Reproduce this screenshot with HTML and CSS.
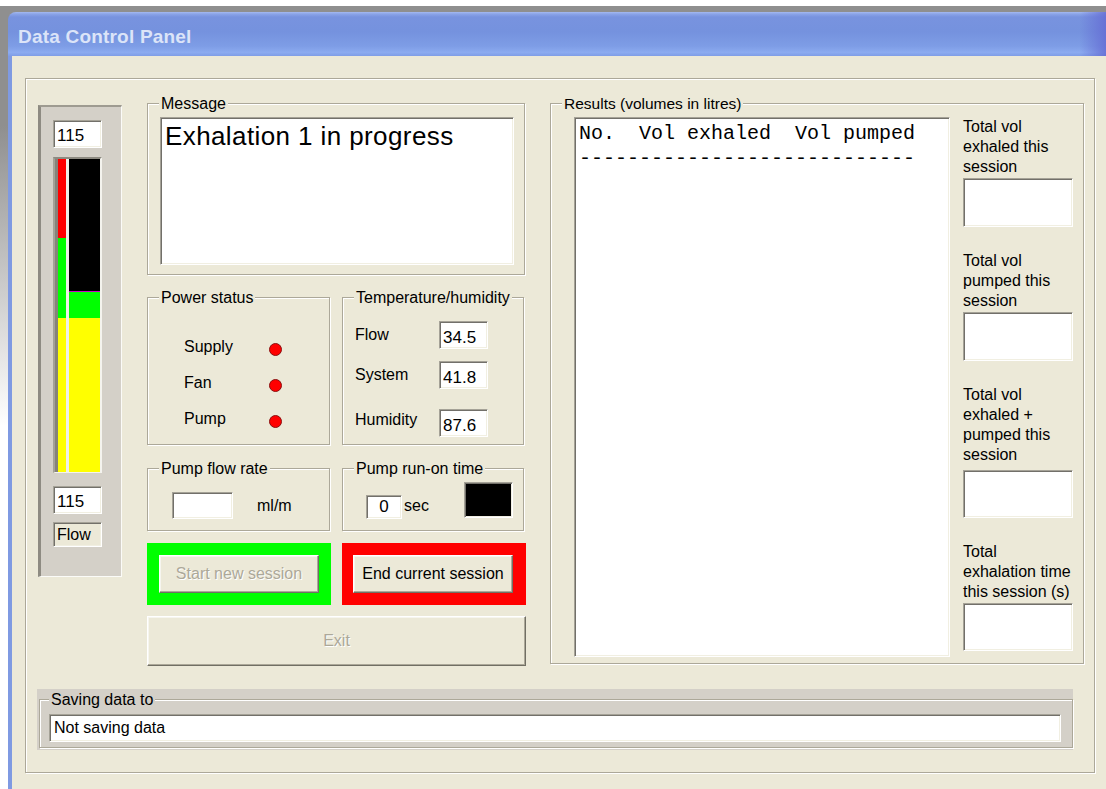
FILE: index.html
```html
<!DOCTYPE html>
<html lang="en">
<head>
<meta charset="utf-8">
<title>Data Control Panel</title>
<link rel="stylesheet" href="styles.css">
</head>
<body>
<div class="desktop">
  <div class="window">
    <div class="titlebar"><span class="title">Data Control Panel</span></div>
    <div class="client">
      <div class="frame">
        <div class="main-row">

          <!-- flow meter -->
          <div class="meter">
            <div class="field value meter-value">115</div>
            <div class="bargraph">
              <div class="bar bar-thin">
                <div class="seg seg-red" style="height:79px"></div>
                <div class="seg seg-green" style="height:80px"></div>
                <div class="seg seg-yellow"></div>
              </div>
              <div class="bar-divider"></div>
              <div class="bar bar-wide">
                <div class="seg seg-black" style="height:132px"></div>
                <div class="seg seg-marker"></div>
                <div class="seg seg-green" style="height:26px"></div>
                <div class="seg seg-yellow"></div>
              </div>
            </div>
            <div class="field value meter-value meter-low">115</div>
            <div class="field meter-caption">Flow</div>
          </div>

          <!-- centre column -->
          <div class="controls">
            <fieldset class="group message-group">
              <legend>Message</legend>
              <div class="message-body">
                <div class="field message-box">Exhalation 1 in progress</div>
              </div>
            </fieldset>

            <div class="pair status-pair">
              <fieldset class="group power-group">
                <legend>Power status</legend>
                <div class="status-grid">
                  <span>Supply</span><span class="led"></span>
                  <span>Fan</span><span class="led"></span>
                  <span>Pump</span><span class="led"></span>
                </div>
              </fieldset>
              <fieldset class="group temp-group">
                <legend>Temperature/humidity</legend>
                <div class="temp-body">
                  <div class="temp-row">
                    <span class="temp-label">Flow</span>
                    <div class="field value temp-value">34.5</div>
                  </div>
                  <div class="temp-row">
                    <span class="temp-label">System</span>
                    <div class="field value temp-value">41.8</div>
                  </div>
                  <div class="temp-row temp-row-humidity">
                    <span class="temp-label">Humidity</span>
                    <div class="field value temp-value">87.6</div>
                  </div>
                </div>
              </fieldset>
            </div>

            <div class="pair pump-pair">
              <fieldset class="group pump-group">
                <legend>Pump flow rate</legend>
                <div class="rate-body">
                  <div class="field value rate-value"></div>
                  <span class="unit">ml/m</span>
                </div>
              </fieldset>
              <fieldset class="group runon-group">
                <legend>Pump run-on time</legend>
                <div class="runon-body">
                  <div class="field value runon-value">0</div>
                  <span class="sec">sec</span>
                  <div class="field lamp"></div>
                </div>
              </fieldset>
            </div>

            <div class="pair session-pair">
              <div class="session-frame frame-green">
                <button class="btn" disabled>Start new session</button>
              </div>
              <div class="session-frame frame-red">
                <button class="btn">End current session</button>
              </div>
            </div>

            <button class="btn exit-btn" disabled>Exit</button>
          </div>

          <!-- results -->
          <fieldset class="group results-group">
            <legend>Results (volumes in litres)</legend>
            <div class="results-body">
              <div class="field results-list">No.  Vol exhaled  Vol pumped
----------------------------</div>
              <div class="totals">
                <div class="total-label">Total vol<br>exhaled this<br>session</div>
                <div class="field total-box"></div>
                <div class="total-label total-next">Total vol<br>pumped this<br>session</div>
                <div class="field total-box"></div>
                <div class="total-label total-next">Total vol<br>exhaled +<br>pumped this<br>session</div>
                <div class="field total-box total-box-low"></div>
                <div class="total-label total-next">Total<br>exhalation time<br>this session (s)</div>
                <div class="field total-box total-box-last"></div>
              </div>
            </div>
          </fieldset>
        </div>

        <div class="saving">
          <fieldset class="group saving-group">
            <legend>Saving data to</legend>
            <div class="saving-body">
              <div class="field saving-path">Not saving data</div>
            </div>
          </fieldset>
        </div>
      </div>
    </div>
  </div>
</div>
</body>
</html>
```

FILE: styles.css
```css
* { box-sizing: border-box; }

html, body {
  margin: 0;
  height: 100%;
  overflow: hidden;
  background: #fff;
}

body {
  font-family: "Liberation Sans", Arial, sans-serif;
  font-size: 16px;
  color: #000;
}

/* desktop + window chrome */
.desktop {
  margin-top: 6px;
  height: 783px;
  background: linear-gradient(180deg, #8f8f8f 0, #8f8f8f 120px, #fff 420px);
  padding: 6px 0 0 8px;
}

.window {
  width: 1098px;
  height: 777px;
  display: flex;
  flex-direction: column;
}

.titlebar {
  flex: none;
  height: 44px;
  border-top-left-radius: 8px;
  padding: 5px 0 0 10px;
  display: flex;
  align-items: center;
  background:
    linear-gradient(90deg, rgba(104, 112, 214, 0) 97.6%, rgba(100, 108, 212, .85) 100%),
    linear-gradient(180deg, #a5baf1 0, #8ba4e8 2px, #7893df 5px, #7592de 45%, #7e9de6 78%, #8cabf0 92%, #7f9de6 100%);
}

.title {
  color: #dce4f8;
  font-weight: bold;
  font-size: 19px;
  letter-spacing: .2px;
}

.client {
  flex: 1;
  background: #ece9d8;
  border-left: 4px solid #7f9ae2;
  padding: 22px 0 0 13px;
}

.frame {
  width: 1070px;
  height: 695px;
  border: 1px solid #aca899;
  box-shadow: inset 1px 1px 0 #fff, 1px 1px 0 #fff;
  padding: 16px 0 0 12px;
}

.main-row {
  display: flex;
  align-items: flex-start;
  height: 571px;
}

/* shared controls */
.field {
  background: #fff;
  border: 1px solid;
  border-color: #a5a297 #fff #fff #a5a297;
  box-shadow: inset 1px 1px 0 #72706a, inset -1px -1px 0 #f1efe2;
}

.value {
  font-size: 17px;
  line-height: 24px;
  padding: 3px 0 0 3px;
  white-space: nowrap;
  overflow: hidden;
}

.group {
  margin: 0;
  padding: 0;
  min-width: 0;
  border: 1px solid #aca899;
  box-shadow: inset 1px 1px 0 #fff, 1px 1px 0 #fff;
}

.group > legend {
  margin-left: 11px;
  padding: 0 2px;
  font-size: 16px;
  line-height: 17px;
  background: #ece9d8;
}

.btn {
  display: block;
  width: 160px;
  height: 38px;
  padding: 0;
  font-family: inherit;
  font-size: 16px;
  color: #000;
  background: #ece9d8;
  border: 1px solid;
  border-color: #fff #716f64 #716f64 #fff;
  box-shadow: inset -1px -1px 0 #aca899, inset 1px 1px 0 #f6f5ef;
}

.btn:disabled {
  color: #aca899;
  text-shadow: 1px 1px 0 #fff;
}

/* flow meter */
.meter {
  flex: none;
  width: 84px;
  height: 472px;
  margin-top: 10px;
  border-style: solid;
  border-width: 2px 1px 1px 3px;
  border-color: #9e9b91 #fbfbf8 #fbfbf8 #8e8b82;
  background: #d4d0c8;
  padding: 13px 0 0 12px;
}

.meter-value {
  width: 49px;
  height: 28px;
}

.meter-low { margin-top: 13px; }

.meter-caption {
  width: 49px;
  height: 25px;
  margin-top: 8px;
  background: #ece9d8;
  line-height: 20px;
  padding: 2px 0 0 3px;
}

.bargraph {
  display: flex;
  width: 49px;
  height: 316px;
  margin-top: 9px;
  border-style: solid;
  border-width: 2px 2px 1px 2px;
  border-color: #8d8a81 #f4f3ee #f4f3ee #a4a197;
  padding-left: 3px;
  background: #86837a;
}

.bar {
  display: flex;
  flex-direction: column;
}

.bar-thin { width: 8px; }
.bar-wide { width: 31px; }

.bar-divider {
  width: 3px;
  background: #f0f0ea;
}

.seg { flex: none; }
.seg-red { background: #ff0000; }
.seg-green { background: #00ff00; }
.seg-black { background: #000; }
.seg-marker { height: 1px; background: #c800c8; }
.seg-yellow { flex: 1; background: #ffff00; }

/* centre column */
.controls {
  flex: none;
  width: 379px;
  margin-left: 25px;
}

.message-group {
  width: 378px;
  height: 180px;
}

.message-body { padding: 5px 0 0 12px; }

.message-box {
  width: 354px;
  height: 148px;
  font-size: 26px;
  line-height: 30px;
  letter-spacing: .4px;
  padding: 3px 0 0 4px;
}

.pair { display: flex; }

.status-pair { margin-top: 14px; }

.power-group {
  width: 183px;
  height: 156px;
}

.temp-group {
  width: 182px;
  height: 156px;
  margin-left: 12px;
}

.status-grid {
  display: grid;
  grid-template-columns: 85px 13px;
  grid-auto-rows: 36px;
  padding: 31px 0 0 36px;
  line-height: 20px;
}

.led {
  width: 13px;
  height: 13px;
  margin-top: 6px;
  border-radius: 50%;
  background: #ff0000;
  border: 1px solid #8a1010;
}

.temp-body { padding: 15px 0 0 12px; }

.temp-row {
  display: flex;
  height: 28px;
}

.temp-row + .temp-row { margin-top: 12px; }
.temp-row-humidity.temp-row { margin-top: 20px; }

.temp-label {
  width: 84px;
  padding-top: 4px;
  line-height: 20px;
}

.temp-row-humidity .temp-label { padding-top: 1px; }

.temp-value {
  width: 49px;
  height: 28px;
  padding-top: 4px;
}

.pump-pair { margin-top: 15px; }

.pump-group {
  width: 183px;
  height: 71px;
}

.rate-body {
  display: flex;
  align-items: center;
  padding: 15px 0 0 24px;
}

.rate-value {
  width: 61px;
  height: 27px;
}

.unit {
  margin-left: 24px;
  line-height: 20px;
}

.runon-group {
  width: 182px;
  height: 71px;
  margin-left: 12px;
}

.runon-body {
  display: flex;
  align-items: flex-end;
  height: 42px;
  padding: 5px 10px 0 23px;
}

.runon-value {
  width: 36px;
  height: 24px;
  padding: 0;
  line-height: 22px;
  text-align: center;
}

.sec {
  margin: 0 0 3px 2px;
  line-height: 20px;
}

.lamp {
  margin-left: auto;
  margin-bottom: 1px;
  width: 49px;
  height: 36px;
}

.field.lamp { background: #000; }

.session-pair { margin-top: 12px; }

.session-frame {
  width: 184px;
  height: 62px;
  padding: 12px;
}

.frame-green { background: #00ff00; }

.frame-red {
  background: #ff0000;
  margin-left: 11px;
  padding-left: 11px;
}

.exit-btn {
  width: 379px;
  height: 50px;
  margin-top: 11px;
}

/* results */
.results-group {
  flex: none;
  width: 534px;
  height: 569px;
  margin-left: 24px;
}

.results-group > legend { font-size: 15.5px; }

.results-body {
  display: flex;
  padding: 5px 0 0 23px;
}

.results-list {
  width: 376px;
  height: 540px;
  font-family: "Liberation Mono", "Courier New", monospace;
  font-size: 20px;
  line-height: 25px;
  padding: 3px 0 0 4px;
  white-space: pre;
}

.totals {
  width: 110px;
  margin-left: 13px;
  line-height: 20px;
  white-space: nowrap;
}

.total-next { margin-top: 24px; }

.total-box {
  height: 49px;
  margin-top: 1px;
}

.total-box.total-box-low {
  height: 48px;
  margin-top: 5px;
}

.total-box.total-box-last { height: 48px; }

/* saving path */
.saving {
  width: 1036px;
  height: 61px;
  margin: 23px 0 0 -1px;
  background: #d4d0c8;
  padding: 2px 0 0 2px;
}

.saving-group {
  width: 1034px;
  height: 57px;
}

.saving-group > legend {
  margin-left: 9px;
  background: #d4d0c8;
}

.saving-body { padding: 6px 0 0 9px; }

.saving-path {
  width: 1012px;
  height: 28px;
  line-height: 20px;
  padding: 3px 0 0 4px;
}
```
